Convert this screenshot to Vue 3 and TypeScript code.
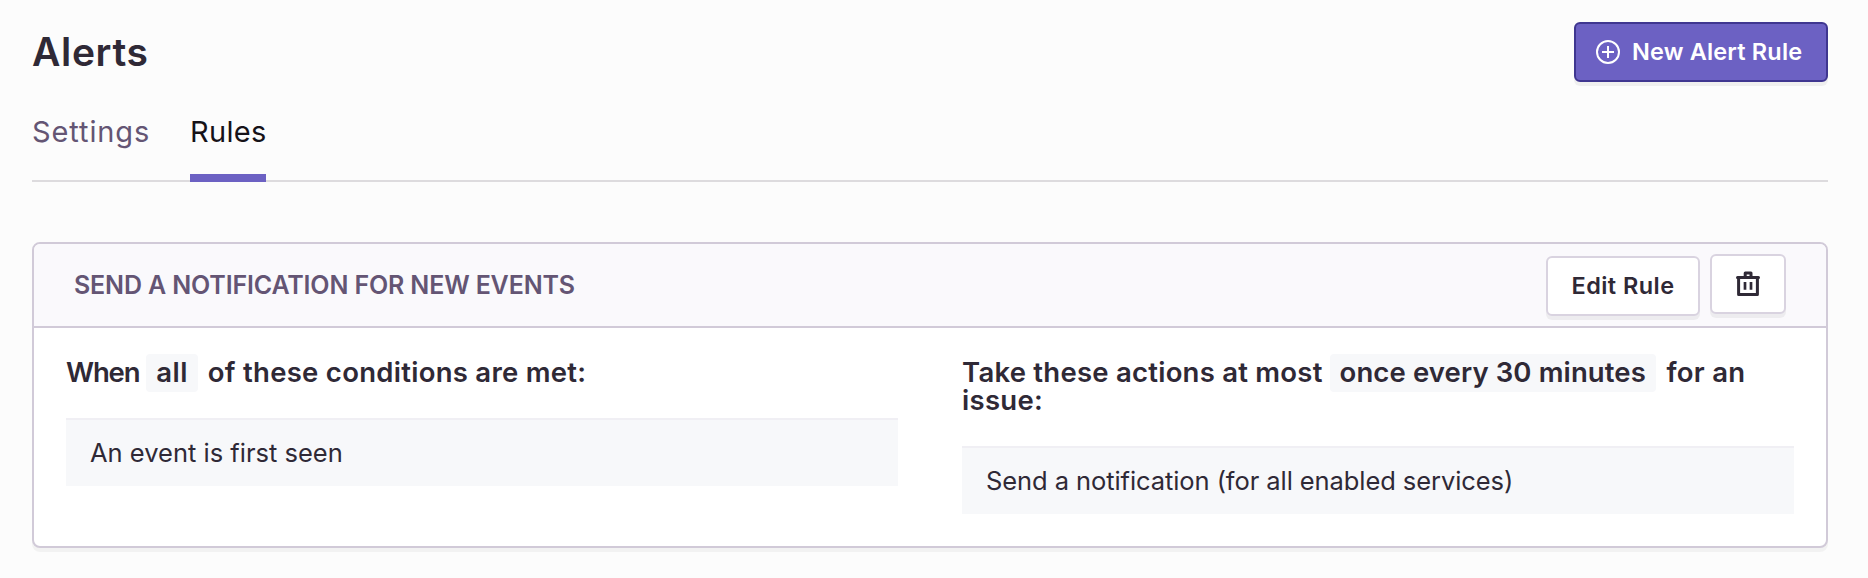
<script setup lang="ts">
interface Tab {
  label: string
  key: string
  active: boolean
}

const tabs: Tab[] = [
  { label: 'Settings', key: 'settings', active: false },
  { label: 'Rules', key: 'rules', active: true },
]

const conditions: string[] = ['An event is first seen']
const actions: string[] = ['Send a notification (for all enabled services)']
</script>

<template>
  <main class="page">
    <header class="page-header">
      <h1>Alerts</h1>
      <button class="btn btn-primary" type="button">
        <svg class="icon-add" viewBox="0 0 24 24" fill="none" stroke="currentColor" stroke-width="2">
          <circle cx="12" cy="12" r="11" />
          <path d="M12 6v12M6 12h12" />
        </svg>
        <span>New Alert Rule</span>
      </button>
    </header>

    <nav class="tabs">
      <a v-for="tab in tabs" :key="tab.key" :class="['tab', tab.key, { active: tab.active }]">{{ tab.label }}</a>
    </nav>

    <section class="panel">
      <div class="panel-header">
        <h2>Send a notification for new events</h2>
        <div class="panel-actions">
          <button class="btn btn-edit" type="button">Edit Rule</button>
          <button class="btn btn-delete" type="button" aria-label="Delete rule">
            <svg class="icon-trash" viewBox="0 0 24 26" fill="none" stroke="currentColor" stroke-linejoin="round">
              <path d="M1.500 6.500h21" stroke-width="3" stroke-linecap="round" />
              <path d="M2.600 6.500v17h18.800v-17" stroke-width="3" />
              <path d="M9.200 5.500V1.900h5.800V5.500" stroke-width="3" />
              <path d="M9 11v7.800M15 11v7.800" stroke-width="2.700" />
            </svg>
          </button>
        </div>
      </div>
      <div class="panel-body">
        <div class="column">
          <h3><span class="when">When</span> <span class="chip chip-match">all</span> <span class="conditions">of these conditions are met:</span></h3>
          <ul>
            <li v-for="c in conditions" :key="c" class="condition">{{ c }}</li>
          </ul>
        </div>
        <div class="column">
          <h3><span class="take">Take these actions at most</span> <span class="chip chip-freq">once every 30 minutes</span> <span class="issue">for an issue:</span></h3>
          <ul>
            <li v-for="a in actions" :key="a" class="action">{{ a }}</li>
          </ul>
        </div>
      </div>
    </section>
  </main>
</template>

<style>
body {
  background: #fcfcfc;
}
</style>

<style scoped>
.page {
  box-sizing: border-box;
  padding: 22px 40px 30px 32px;
  font-family: Inter, "Noto Sans", sans-serif;
  color: #2f2936;
}

h1,
h2,
h3,
ul {
  margin: 0;
  padding: 0;
  font-weight: 600;
}

.page-header {
  display: flex;
  align-items: center;
  justify-content: space-between;
  height: 60px;
}

h1 {
  font-size: 39px;
  line-height: 48px;
  letter-spacing: 0.65px;
}

.btn {
  box-sizing: border-box;
  display: flex;
  align-items: center;
  justify-content: center;
  height: 60px;
  padding: 0;
  border: 2px solid #d9d3e0;
  border-radius: 6px;
  background: #fff;
  color: #2f2936;
  font: 600 23.5px/28px Inter, "Noto Sans", sans-serif;
  white-space: nowrap;
  box-shadow: 0 4px 0 rgba(0, 0, 0, 0.05);
}

.btn-primary {
  justify-content: flex-start;
  width: 254px;
  padding-left: 20px;
  gap: 12px;
  border-color: #3f3690;
  background: #6c61c3;
  color: #fff;
  letter-spacing: 0.17px;
}

.icon-add {
  width: 24px;
  height: 24px;
}

.tabs {
  display: flex;
  margin-top: 30px;
  border-bottom: 2px solid #dddbde;
}

.tab {
  box-sizing: border-box;
  height: 70px;
  margin-bottom: -2px;
  border-bottom: 8px solid transparent;
  color: #645574;
  font-size: 29px;
  line-height: 40px;
}

.settings {
  width: 118px;
  margin-right: 40px;
  letter-spacing: 0.9px;
}

.rules {
  width: 76px;
  letter-spacing: 0.3px;
}

.tab.active {
  border-bottom-color: #6c61c3;
  color: #161218;
}

.panel {
  margin-top: 60px;
  border: 2px solid #d1cad8;
  border-radius: 8px;
  background: #fff;
  box-shadow: 0 4px 0 rgba(0, 0, 0, 0.04);
}

.panel-header {
  box-sizing: border-box;
  display: flex;
  align-items: center;
  justify-content: space-between;
  height: 84px;
  padding: 0 40px;
  border-bottom: 2px solid #d1cad8;
  border-radius: 6px 6px 0 0;
  background: #faf9fc;
}

h2 {
  color: #645574;
  font-size: 25px;
  line-height: 30px;
  letter-spacing: -0.15px;
  text-transform: uppercase;
}

.panel-actions {
  display: flex;
  align-items: flex-start;
  gap: 10px;
}

.btn-edit {
  width: 154px;
  margin-top: 2px;
  letter-spacing: 0.45px;
}

.btn-delete {
  width: 76px;
}

.icon-trash {
  width: 24px;
  height: 26px;
}

.panel-body {
  display: grid;
  grid-template-columns: 1fr 1fr;
  gap: 64px;
  padding: 30px 32px 32px;
}

h3 {
  margin-bottom: 32px;
  font-size: 27.5px;
  line-height: 28px;
}

.chip {
  padding: 1px 10px 3px;
  border-radius: 4px;
  background: #f7f8fa;
}

.when {
  letter-spacing: -1.15px;
}

.chip-match {
  margin-right: 3px;
  letter-spacing: 0.45px;
}

.conditions {
  letter-spacing: 0.28px;
}

.take {
  letter-spacing: 0.24px;
}

.chip-freq {
  margin-right: 3.5px;
  letter-spacing: 0.12px;
}

.issue {
  letter-spacing: 0.3px;
}

ul {
  list-style: none;
}

li {
  box-sizing: border-box;
  height: 68px;
  padding: 18px 24px;
  border-top: 2px solid #f0eff4;
  background: #f7f8fa;
  font-size: 25.5px;
  font-weight: 400;
  line-height: 30px;
}

.action {
  letter-spacing: -0.08px;
}
</style>
